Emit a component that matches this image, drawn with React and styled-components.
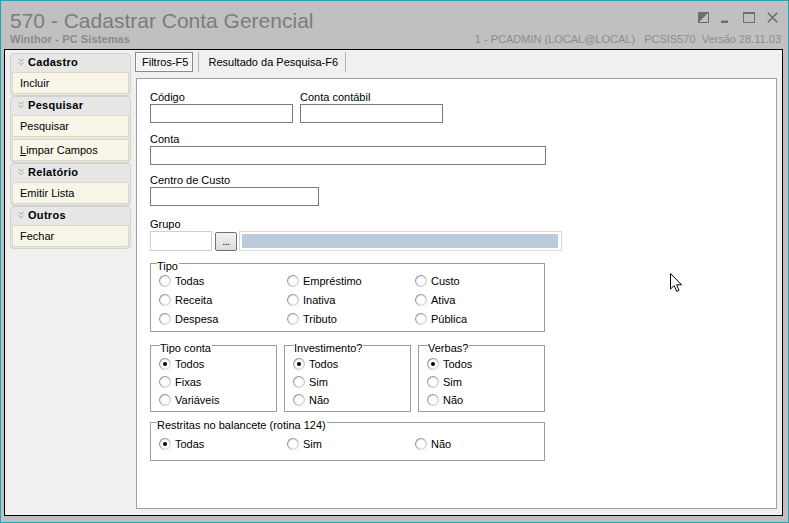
import React from "react";
import styled, { createGlobalStyle } from "styled-components";

const Global = createGlobalStyle`
  html, body { margin: 0; padding: 0; background: #c0c0c0; }
  body { font-family: "Liberation Sans", Arial, sans-serif; font-size: 11px; color: #000; }
  * { box-sizing: border-box; }
`;

const Window = styled.div`
  width: 789px;
  height: 523px;
  border: 1px solid #26a3b7;
  background: #c0c0c0;
  display: flex;
  flex-direction: column;
  padding: 0 5px 6px 3px;
`;

const TitleBar = styled.div`
  height: 48px;
  flex: none;
  display: flex;
  justify-content: space-between;
`;

const TitleLeft = styled.div`
  padding: 8px 0 0 6px;
`;

const Title = styled.div`
  font-family: "Liberation Sans", Arial, sans-serif;
  font-size: 21px;
  line-height: 24px;
  color: #7c7c7c;
`;

const Subtitle = styled.div`
  font-weight: bold;
  font-size: 11px;
  line-height: 13px;
  color: #8a8a8a;
  letter-spacing: 0.1px;
`;

const TitleRight = styled.div`
  display: flex;
  flex-direction: column;
  align-items: flex-end;
  padding: 10px 2px 0 0;
`;

const WinButtons = styled.div`
  display: flex;
  align-items: center;
  height: 12px;
  margin-bottom: 10px;
  padding-right: 3px;
`;

const WinBtn = styled.svg`
  width: ${(p) => p.$w || 11}px;
  height: 11px;
  margin-left: ${(p) => p.$ml || 0}px;
  display: block;
`;

const Status = styled.div`
  font-size: 11px;
  line-height: 13px;
  color: #8d8d8d;
  white-space: pre;
`;

const Frame = styled.div`
  flex: 1;
  border: 1px solid #000;
  background: #f0f0f0;
  display: flex;
  padding-left: 5px;
`;

const Sidebar = styled.div`
  width: 121px;
  flex: none;
  display: flex;
  flex-direction: column;
  padding-top: 3px;
`;

const Group = styled.div`
  border: 1px solid #d2d2d2;
  border-radius: 4px;
  background: #e7e7e7;
  padding: 0 1px 1px;
  display: flex;
  flex-direction: column;
  gap: 2px;
`;

const GroupHeader = styled.div`
  height: 18px;
  margin-bottom: -2px;
  display: flex;
  align-items: center;
  padding: 0 0 3px 6px;
  gap: 4px;
  font-weight: bold;
  font-size: 11px;
  letter-spacing: 0.3px;
`;

const Chevron = styled.svg`
  width: 6px;
  height: 8px;
  display: block;
`;

const Item = styled.div`
  height: 22px;
  border: 1px solid #ddd9c0;
  background: #f8f6e8;
  display: flex;
  align-items: center;
  padding-left: 7px;
  font-size: 11px;
`;

const Main = styled.div`
  flex: 1;
  display: flex;
  flex-direction: column;
  margin-left: 4px;
  padding: 2px 5px 6px 0;
`;

const Tabs = styled.div`
  display: flex;
  height: 20px;
  flex: none;
`;

const Tab = styled.div`
  height: 20px;
  display: flex;
  align-items: center;
  font-size: 11px;
  white-space: nowrap;
  ${(p) =>
    p.$active
      ? `
    border: 1px solid #8a8a8a;
    box-shadow: inset 0 0 0 1px #ffffff;
    background: #f3f3f3;
    padding: 0 4px 0 6px;
  `
      : `
    margin-left: 5px;
    border-left: 1px solid #b4b4b4;
    border-right: 1px solid #b4b4b4;
    padding: 0 7px 0 9px;
  `}
`;

const Panel = styled.div`
  position: relative;
  flex: 1;
  margin: 6px 0 0 1px;
  background: #ffffff;
  border: 1px solid #a0a0a0;
  padding: 12px 0 0 13px;
`;

const Row = styled.div`
  display: flex;
  gap: ${(p) => (p.$tight ? 0 : 7)}px;
  margin-top: ${(p) => p.$mt || 0}px;
`;

const Field = styled.div`
  display: flex;
  flex-direction: column;
`;

const Label = styled.div`
  font-size: 11px;
  line-height: 13px;
`;

const Input = styled.div`
  width: ${(p) => p.$w}px;
  height: ${(p) => p.$h || 19}px;
  border: 1px solid ${(p) => (p.$light ? "#cfcfcf" : "#7a7a7a")};
  background: #fff;
`;

const DotsButton = styled.div`
  width: 22px;
  height: 19px;
  margin: 1px 0 0 3px;
  border: 1px solid #707070;
  border-radius: 2px;
  background: linear-gradient(#f2f2f2, #dcdcdc);
  display: flex;
  align-items: flex-end;
  justify-content: center;
  font-size: 11px;
  line-height: 11px;
  padding-bottom: 3px;
  letter-spacing: -0.5px;
`;

const Lookup = styled.div`
  width: 323px;
  height: 20px;
  margin-left: 2px;
  border: 1px solid #d9d9d9;
  padding: 2px 3px 2px 2px;
`;

const LookupBar = styled.div`
  height: 100%;
  background: #bccbdb;
`;

const Box = styled.div`
  position: relative;
  width: ${(p) => p.$w}px;
  border: 1px solid #9c9c9c;
  padding: ${(p) => p.$pt}px 0 ${(p) => p.$pb}px 8px;
  margin-top: ${(p) => p.$mt || 0}px;
`;

const Legend = styled.span`
  position: absolute;
  top: -4px;
  left: ${(p) => p.$left}px;
  background: #fff;
  padding: 0 1px 0 0;
  font-size: 11px;
  line-height: 13px;
`;

const RadioGrid = styled.div`
  display: grid;
  grid-template-columns: repeat(${(p) => p.$cols}, ${(p) => p.$colw}px);
  grid-auto-rows: ${(p) => p.$rowh}px;
`;

const RadioItem = styled.div`
  display: flex;
  align-items: center;
  gap: 4px;
  font-size: 11px;
`;

const RadioSvg = styled.svg`
  width: 12px;
  height: 12px;
  flex: none;
  display: block;
`;

const LowerRow = styled.div`
  width: 395px;
  display: flex;
  justify-content: space-between;
  margin-top: 13px;
`;

const Cursor = styled.svg`
  position: absolute;
  left: 533px;
  top: 194px;
  width: 13px;
  height: 20px;
`;

const Radio = ({ checked, children }) => (
  <RadioItem>
    <RadioSvg viewBox="0 0 12 12">
      <defs>
        <linearGradient id="rg" x1="0" y1="0" x2="1" y2="1">
          <stop offset="0" stopColor="#7c7c7c" />
          <stop offset="1" stopColor="#e2e2e2" />
        </linearGradient>
      </defs>
      <circle cx="6" cy="6" r="5.4" fill="#fff" stroke="url(#rg)" strokeWidth="1.1" />
      <circle cx="6" cy="6" r="4.3" fill="none" stroke="#ececec" strokeWidth="0.8" />
      {checked && <circle cx="6" cy="6" r="2" fill="#000" />}
    </RadioSvg>
    <span>{children}</span>
  </RadioItem>
);

const ChevronIcon = () => (
  <Chevron viewBox="0 0 6 8">
    <path d="M0.5 0.8 L3 3.3 L5.5 0.8 M0.5 4.3 L3 6.8 L5.5 4.3" fill="none" stroke="#a5a5a5" strokeWidth="1" />
  </Chevron>
);

const SideGroup = ({ title, children }) => (
  <Group>
    <GroupHeader>
      <ChevronIcon />
      <span>{title}</span>
    </GroupHeader>
    {children}
  </Group>
);

export default function App() {
  return (
    <>
      <Global />
      <Window>
        <TitleBar>
          <TitleLeft>
            <Title>570 - Cadastrar Conta Gerencial</Title>
            <Subtitle>Winthor - PC Sistemas</Subtitle>
          </TitleLeft>
          <TitleRight>
            <WinButtons>
              <WinBtn viewBox="0 0 11 11" $w={11}>
                <rect x="0.5" y="0.5" width="10" height="10" fill="none" stroke="#6e6e6e" />
                <polygon points="0,0 11,0 0,11" fill="#6e6e6e" />
              </WinBtn>
              <WinBtn viewBox="0 0 7 11" $w={7} $ml={12}>
                <rect x="0" y="8.5" width="7" height="2.5" fill="#6e6e6e" />
              </WinBtn>
              <WinBtn viewBox="0 0 12 11" $w={12} $ml={15}>
                <rect x="0.5" y="0.5" width="11" height="10" fill="none" stroke="#6e6e6e" />
                <rect x="0" y="0" width="12" height="2" fill="#6e6e6e" />
              </WinBtn>
              <WinBtn viewBox="0 0 11 11" $w={11} $ml={12}>
                <path d="M0.8 0.8 L10.2 10.2 M10.2 0.8 L0.8 10.2" stroke="#6e6e6e" strokeWidth="1.6" />
              </WinBtn>
            </WinButtons>
            <Status>1 - PCADMIN (LOCAL@LOCAL)   PCSIS570  Versão 28.11.03</Status>
          </TitleRight>
        </TitleBar>
        <Frame>
          <Sidebar>
            <SideGroup title="Cadastro">
              <Item>Incluir</Item>
            </SideGroup>
            <SideGroup title="Pesquisar">
              <Item>Pesquisar</Item>
              <Item>
                <span>
                  <u>L</u>impar Campos
                </span>
              </Item>
            </SideGroup>
            <SideGroup title="Relatório">
              <Item>Emitir Lista</Item>
            </SideGroup>
            <SideGroup title="Outros">
              <Item>Fechar</Item>
            </SideGroup>
          </Sidebar>
          <Main>
            <Tabs>
              <Tab $active>Filtros-F5</Tab>
              <Tab>Resultado da Pesquisa-F6</Tab>
            </Tabs>
            <Panel>
              <Row>
                <Field>
                  <Label>Código</Label>
                  <Input $w={143} />
                </Field>
                <Field>
                  <Label>Conta contábil</Label>
                  <Input $w={143} />
                </Field>
              </Row>
              <Row $mt={10}>
                <Field>
                  <Label>Conta</Label>
                  <Input $w={396} />
                </Field>
              </Row>
              <Row $mt={9}>
                <Field>
                  <Label>Centro de Custo</Label>
                  <Input $w={169} />
                </Field>
              </Row>
              <Row $mt={12}>
                <Field>
                  <Label>Grupo</Label>
                  <Row $tight>
                    <Input $w={62} $h={20} $light />
                    <DotsButton>...</DotsButton>
                    <Lookup>
                      <LookupBar />
                    </Lookup>
                  </Row>
                </Field>
              </Row>
              <Box $w={395} $pt={7} $pb={3} $mt={12}>
                <Legend $left={6}>Tipo</Legend>
                <RadioGrid $cols={3} $colw={128} $rowh={19}>
                  <Radio>Todas</Radio>
                  <Radio>Empréstimo</Radio>
                  <Radio>Custo</Radio>
                  <Radio>Receita</Radio>
                  <Radio>Inativa</Radio>
                  <Radio>Ativa</Radio>
                  <Radio>Despesa</Radio>
                  <Radio>Tributo</Radio>
                  <Radio>Pública</Radio>
                </RadioGrid>
              </Box>
              <LowerRow>
                <Box $w={127} $pt={9} $pb={2}>
                  <Legend $left={9}>Tipo conta</Legend>
                  <RadioGrid $cols={1} $colw={110} $rowh={18}>
                    <Radio checked>Todos</Radio>
                    <Radio>Fixas</Radio>
                    <Radio>Variáveis</Radio>
                  </RadioGrid>
                </Box>
                <Box $w={127} $pt={9} $pb={2}>
                  <Legend $left={9}>Investimento?</Legend>
                  <RadioGrid $cols={1} $colw={110} $rowh={18}>
                    <Radio checked>Todos</Radio>
                    <Radio>Sim</Radio>
                    <Radio>Não</Radio>
                  </RadioGrid>
                </Box>
                <Box $w={127} $pt={9} $pb={2}>
                  <Legend $left={9}>Verbas?</Legend>
                  <RadioGrid $cols={1} $colw={110} $rowh={18}>
                    <Radio checked>Todos</Radio>
                    <Radio>Sim</Radio>
                    <Radio>Não</Radio>
                  </RadioGrid>
                </Box>
              </LowerRow>
              <Box $w={395} $pt={12} $pb={7} $mt={10}>
                <Legend $left={6}>Restritas no balancete (rotina 124)</Legend>
                <RadioGrid $cols={3} $colw={128} $rowh={18}>
                  <Radio checked>Todas</Radio>
                  <Radio>Sim</Radio>
                  <Radio>Não</Radio>
                </RadioGrid>
              </Box>
              <Cursor viewBox="0 0 13 20">
                <path
                  d="M0.5 0.5 L0.5 16 L4.2 12.6 L6.6 18.4 L9 17.4 L6.6 11.8 L11.6 11.8 Z"
                  fill="#fff"
                  stroke="#000"
                  strokeWidth="1"
                  strokeLinejoin="miter"
                />
              </Cursor>
            </Panel>
          </Main>
        </Frame>
      </Window>
    </>
  );
}
